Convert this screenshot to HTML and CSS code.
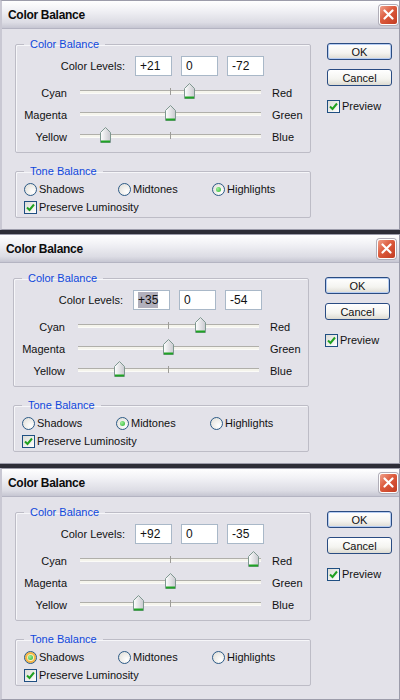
FILE: index.html
```html
<!DOCTYPE html>
<html lang="en">
<head>
    <meta charset="UTF-8">
    <meta name="viewport" content="width=device-width, initial-scale=1.0">
    <title>Color Balance</title>
    <link rel="stylesheet" href="styles.css">
</head>
<body>
    <!-- shared paint for the slider thumbs -->
    <svg class="defs" width="0" height="0" aria-hidden="true">
        <defs>
            <linearGradient id="thumbFill" x1="0" y1="0" x2="1" y2="0">
                <stop offset="0" stop-color="#ffffff"/>
                <stop offset="1" stop-color="#c9c9cf"/>
            </linearGradient>
        </defs>
    </svg>

    <!-- Highlights -->
    <div class="dialog">
        <div class="titlebar">
            <span class="title">Color Balance</span>
            <span class="close"><svg width="11" height="11" viewBox="0 0 11 11"><path d="M1.5 1.5 L9.5 9.5 M9.5 1.5 L1.5 9.5" stroke="#fff" stroke-width="2.2" stroke-linecap="round"/></svg></span>
        </div>
        <div class="body">
            <div class="main">
                <fieldset class="group balance">
                    <legend>Color Balance</legend>
                    <div class="levels">
                        <span class="levels-label">Color Levels:</span>
                        <span class="field">+21</span>
                        <span class="field">0</span>
                        <span class="field">-72</span>
                    </div>
                    <div class="slider-row">
                        <span class="side-left">Cyan</span>
                        <div class="track"><span class="thumb" style="left:104px"><svg width="11" height="16" viewBox="0 0 11 16"><path d="M0.5 5.5 L5.5 0.5 L10.5 5.5 V15.5 H0.5 Z" fill="url(#thumbFill)" stroke="#7f9890"/><path d="M1 14.5 H10" stroke="#1fa324" stroke-width="2"/></svg></span></div>
                        <span class="side-right">Red</span>
                    </div>
                    <div class="slider-row">
                        <span class="side-left">Magenta</span>
                        <div class="track"><span class="thumb" style="left:85px"><svg width="11" height="16" viewBox="0 0 11 16"><path d="M0.5 5.5 L5.5 0.5 L10.5 5.5 V15.5 H0.5 Z" fill="url(#thumbFill)" stroke="#7f9890"/><path d="M1 14.5 H10" stroke="#1fa324" stroke-width="2"/></svg></span></div>
                        <span class="side-right">Green</span>
                    </div>
                    <div class="slider-row">
                        <span class="side-left">Yellow</span>
                        <div class="track"><span class="thumb" style="left:20px"><svg width="11" height="16" viewBox="0 0 11 16"><path d="M0.5 5.5 L5.5 0.5 L10.5 5.5 V15.5 H0.5 Z" fill="url(#thumbFill)" stroke="#7f9890"/><path d="M1 14.5 H10" stroke="#1fa324" stroke-width="2"/></svg></span></div>
                        <span class="side-right">Blue</span>
                    </div>
                </fieldset>
                <fieldset class="group tone">
                    <legend>Tone Balance</legend>
                    <div class="radios">
                        <span class="option"><span class="radio"></span>Shadows</span>
                        <span class="option"><span class="radio"></span>Midtones</span>
                        <span class="option"><span class="radio on"></span>Highlights</span>
                    </div>
                    <div class="check-row">
                        <span class="checkbox"><svg width="11" height="11" viewBox="0 0 11 11"><path d="M2 5.5 L4.5 8 L9 2.5" fill="none" stroke="#21a121" stroke-width="2"/></svg></span>Preserve Luminosity
                    </div>
                </fieldset>
            </div>
            <div class="side">
                <button class="btn default">OK</button>
                <button class="btn">Cancel</button>
                <div class="check-row preview">
                    <span class="checkbox"><svg width="11" height="11" viewBox="0 0 11 11"><path d="M2 5.5 L4.5 8 L9 2.5" fill="none" stroke="#21a121" stroke-width="2"/></svg></span>Preview
                </div>
            </div>
        </div>
    </div>

    <!-- Midtones -->
    <div class="dialog shifted">
        <div class="titlebar">
            <span class="title">Color Balance</span>
            <span class="close"><svg width="11" height="11" viewBox="0 0 11 11"><path d="M1.5 1.5 L9.5 9.5 M9.5 1.5 L1.5 9.5" stroke="#fff" stroke-width="2.2" stroke-linecap="round"/></svg></span>
        </div>
        <div class="body">
            <div class="main">
                <fieldset class="group balance">
                    <legend>Color Balance</legend>
                    <div class="levels">
                        <span class="levels-label">Color Levels:</span>
                        <span class="field"><span class="selected">+35</span></span>
                        <span class="field">0</span>
                        <span class="field">-54</span>
                    </div>
                    <div class="slider-row">
                        <span class="side-left">Cyan</span>
                        <div class="track"><span class="thumb" style="left:117px"><svg width="11" height="16" viewBox="0 0 11 16"><path d="M0.5 5.5 L5.5 0.5 L10.5 5.5 V15.5 H0.5 Z" fill="url(#thumbFill)" stroke="#7f9890"/><path d="M1 14.5 H10" stroke="#1fa324" stroke-width="2"/></svg></span></div>
                        <span class="side-right">Red</span>
                    </div>
                    <div class="slider-row">
                        <span class="side-left">Magenta</span>
                        <div class="track"><span class="thumb" style="left:85px"><svg width="11" height="16" viewBox="0 0 11 16"><path d="M0.5 5.5 L5.5 0.5 L10.5 5.5 V15.5 H0.5 Z" fill="url(#thumbFill)" stroke="#7f9890"/><path d="M1 14.5 H10" stroke="#1fa324" stroke-width="2"/></svg></span></div>
                        <span class="side-right">Green</span>
                    </div>
                    <div class="slider-row">
                        <span class="side-left">Yellow</span>
                        <div class="track"><span class="thumb" style="left:36px"><svg width="11" height="16" viewBox="0 0 11 16"><path d="M0.5 5.5 L5.5 0.5 L10.5 5.5 V15.5 H0.5 Z" fill="url(#thumbFill)" stroke="#7f9890"/><path d="M1 14.5 H10" stroke="#1fa324" stroke-width="2"/></svg></span></div>
                        <span class="side-right">Blue</span>
                    </div>
                </fieldset>
                <fieldset class="group tone">
                    <legend>Tone Balance</legend>
                    <div class="radios">
                        <span class="option"><span class="radio"></span>Shadows</span>
                        <span class="option"><span class="radio on"></span>Midtones</span>
                        <span class="option"><span class="radio"></span>Highlights</span>
                    </div>
                    <div class="check-row">
                        <span class="checkbox"><svg width="11" height="11" viewBox="0 0 11 11"><path d="M2 5.5 L4.5 8 L9 2.5" fill="none" stroke="#21a121" stroke-width="2"/></svg></span>Preserve Luminosity
                    </div>
                </fieldset>
            </div>
            <div class="side">
                <button class="btn default">OK</button>
                <button class="btn">Cancel</button>
                <div class="check-row preview">
                    <span class="checkbox"><svg width="11" height="11" viewBox="0 0 11 11"><path d="M2 5.5 L4.5 8 L9 2.5" fill="none" stroke="#21a121" stroke-width="2"/></svg></span>Preview
                </div>
            </div>
        </div>
    </div>

    <!-- Shadows -->
    <div class="dialog last">
        <div class="titlebar">
            <span class="title">Color Balance</span>
            <span class="close"><svg width="11" height="11" viewBox="0 0 11 11"><path d="M1.5 1.5 L9.5 9.5 M9.5 1.5 L1.5 9.5" stroke="#fff" stroke-width="2.2" stroke-linecap="round"/></svg></span>
        </div>
        <div class="body">
            <div class="main">
                <fieldset class="group balance">
                    <legend>Color Balance</legend>
                    <div class="levels">
                        <span class="levels-label">Color Levels:</span>
                        <span class="field">+92</span>
                        <span class="field">0</span>
                        <span class="field">-35</span>
                    </div>
                    <div class="slider-row">
                        <span class="side-left">Cyan</span>
                        <div class="track"><span class="thumb" style="left:168px"><svg width="11" height="16" viewBox="0 0 11 16"><path d="M0.5 5.5 L5.5 0.5 L10.5 5.5 V15.5 H0.5 Z" fill="url(#thumbFill)" stroke="#7f9890"/><path d="M1 14.5 H10" stroke="#1fa324" stroke-width="2"/></svg></span></div>
                        <span class="side-right">Red</span>
                    </div>
                    <div class="slider-row">
                        <span class="side-left">Magenta</span>
                        <div class="track"><span class="thumb" style="left:85px"><svg width="11" height="16" viewBox="0 0 11 16"><path d="M0.5 5.5 L5.5 0.5 L10.5 5.5 V15.5 H0.5 Z" fill="url(#thumbFill)" stroke="#7f9890"/><path d="M1 14.5 H10" stroke="#1fa324" stroke-width="2"/></svg></span></div>
                        <span class="side-right">Green</span>
                    </div>
                    <div class="slider-row">
                        <span class="side-left">Yellow</span>
                        <div class="track"><span class="thumb" style="left:53px"><svg width="11" height="16" viewBox="0 0 11 16"><path d="M0.5 5.5 L5.5 0.5 L10.5 5.5 V15.5 H0.5 Z" fill="url(#thumbFill)" stroke="#7f9890"/><path d="M1 14.5 H10" stroke="#1fa324" stroke-width="2"/></svg></span></div>
                        <span class="side-right">Blue</span>
                    </div>
                </fieldset>
                <fieldset class="group tone">
                    <legend>Tone Balance</legend>
                    <div class="radios">
                        <span class="option"><span class="radio on hover"></span>Shadows</span>
                        <span class="option"><span class="radio"></span>Midtones</span>
                        <span class="option"><span class="radio"></span>Highlights</span>
                    </div>
                    <div class="check-row">
                        <span class="checkbox"><svg width="11" height="11" viewBox="0 0 11 11"><path d="M2 5.5 L4.5 8 L9 2.5" fill="none" stroke="#21a121" stroke-width="2"/></svg></span>Preserve Luminosity
                    </div>
                </fieldset>
            </div>
            <div class="side">
                <button class="btn default">OK</button>
                <button class="btn">Cancel</button>
                <div class="check-row preview">
                    <span class="checkbox"><svg width="11" height="11" viewBox="0 0 11 11"><path d="M2 5.5 L4.5 8 L9 2.5" fill="none" stroke="#21a121" stroke-width="2"/></svg></span>Preview
                </div>
            </div>
        </div>
    </div>
</body>
</html>
```

FILE: styles.css
```css
html, body {
    margin: 0;
    padding: 0;
}

body {
    width: 400px;
    height: 700px;
    overflow: hidden;
    background-color: #2d2d37;
    display: flex;
    flex-direction: column;
    gap: 4px;
    font-family: "Liberation Sans", Arial, sans-serif;
    font-size: 11px;
    color: #111;
}

.defs {
    position: absolute;
    width: 0;
    height: 0;
}

/* Window frame */
.dialog {
    width: 400px;
    height: 230px;
    flex: none;
    box-sizing: border-box;
    border: 1px solid #9c9caa;
    border-left: 2px solid #c9c8d3;
    background-color: #e3e2e9;
    display: flex;
    flex-direction: column;
}

.dialog.shifted {
    margin-left: -2px;
    width: 402px;
}

.dialog.last {
    height: 232px;
}

.titlebar {
    height: 27px;
    flex: none;
    display: flex;
    align-items: center;
    justify-content: space-between;
    padding: 0 1px 0 6px;
    background: linear-gradient(#ffffff, #f1f1f5 35%, #dcdce4 80%, #c6c6d2);
    border-bottom: 1px solid #b4b4c2;
}

.dialog.shifted .titlebar {
    padding-right: 3px;
}

.title {
    font-size: 12px;
    font-weight: bold;
    letter-spacing: -0.3px;
    color: #0c0c0c;
}

.close {
    width: 17px;
    height: 18px;
    display: flex;
    align-items: center;
    justify-content: center;
    border: 1px solid #fff;
    border-radius: 3px;
    background: linear-gradient(135deg, #f0a08a, #dc5a3c 45%, #c23c22);
    box-shadow: 0 0 0 1px #b0aeb8;
}

.body {
    flex: 1;
    display: flex;
    gap: 16px;
    padding: 8px 0 0 13px;
}

.main {
    width: 296px;
    display: flex;
    flex-direction: column;
}

/* Group boxes */
.group {
    margin: 0;
    padding: 0;
    border: 1px solid #bdbcc6;
    border-radius: 2px;
    box-sizing: border-box;
    width: 296px;
    box-shadow: inset 1px 1px 0 #f6f6f9;
}

.group legend {
    margin-left: 8px;
    padding: 0 6px;
    line-height: 14px;
    font-size: 11px;
    color: #1048dc;
}

.balance {
    padding: 5px 0 4px 0;
}

.tone {
    margin-top: 11px;
    padding: 3px 0 2px 0;
}

.levels {
    display: flex;
    align-items: center;
    height: 20px;
    margin-bottom: 6px;
}

.levels-label {
    width: 109px;
    text-align: right;
    margin-right: 10px;
}

.field {
    width: 37px;
    height: 20px;
    box-sizing: border-box;
    margin-right: 9px;
    padding: 0 4px;
    display: flex;
    align-items: center;
    background-color: #fff;
    border: 1px solid #a9b8c8;
    font-size: 12px;
}

.field .selected {
    background-color: #b1b0bc;
    line-height: 16px;
}

.slider-row {
    display: flex;
    align-items: center;
    height: 22px;
}

.side-left {
    width: 51px;
    text-align: right;
    margin-right: 13px;
}

.side-right {
    margin-left: 11px;
}

.track {
    position: relative;
    width: 181px;
    height: 2px;
    margin-top: -2px;
    background-color: #f5f4ec;
    border-top: 1px solid #b0afaa;
    border-bottom: 1px solid #fbfbf8;
}

/* centre mark */
.track::after {
    content: "";
    position: absolute;
    left: 90px;
    top: -3px;
    width: 1px;
    height: 7px;
    background-color: #9d9c98;
}

.thumb {
    position: absolute;
    top: -8px;
    width: 11px;
    height: 16px;
    z-index: 1;
}

.thumb svg {
    display: block;
}

/* Radio buttons and check boxes */
.radios {
    display: flex;
    height: 16px;
    align-items: center;
    padding-left: 8px;
}

.option {
    width: 94px;
    display: flex;
    align-items: center;
    gap: 2px;
}

.radio {
    width: 13px;
    height: 13px;
    box-sizing: border-box;
    border-radius: 50%;
    border: 1px solid #2c5a86;
    background: radial-gradient(circle at 70% 70%, #ffffff, #dedcd5);
    display: flex;
    align-items: center;
    justify-content: center;
}

.radio.on::after {
    content: "";
    width: 5px;
    height: 5px;
    border-radius: 50%;
    background: radial-gradient(circle at 35% 35%, #9df09a, #2ab22e);
}

.radio.hover {
    box-shadow: inset 0 0 0 2px #f5b543;
    background: radial-gradient(circle at 70% 70%, #fff6d8, #f5d98a);
}

.check-row {
    display: flex;
    align-items: center;
    gap: 2px;
    height: 16px;
    margin-top: 2px;
    padding-left: 8px;
}

.checkbox {
    width: 13px;
    height: 13px;
    box-sizing: border-box;
    border: 1px solid #1f4f82;
    background: linear-gradient(135deg, #dcdcd6, #ffffff);
    display: flex;
    align-items: center;
    justify-content: center;
}

.checkbox svg {
    display: block;
}

/* Right column */
.side {
    width: 65px;
    display: flex;
    flex-direction: column;
    padding-top: 6px;
}

.btn {
    width: 65px;
    height: 17px;
    padding: 0;
    font-family: "Liberation Sans", Arial, sans-serif;
    font-size: 11px;
    color: #111;
    border: 1px solid #2a4c82;
    border-radius: 3px;
    background: linear-gradient(#ffffff, #f4f4f0 60%, #dddbd2);
}

.btn.default {
    box-shadow: inset 0 0 0 1px #b6cdf2;
}

.btn + .btn {
    margin-top: 9px;
}

.preview {
    margin-top: 12px;
    padding-left: 0;
}
```
